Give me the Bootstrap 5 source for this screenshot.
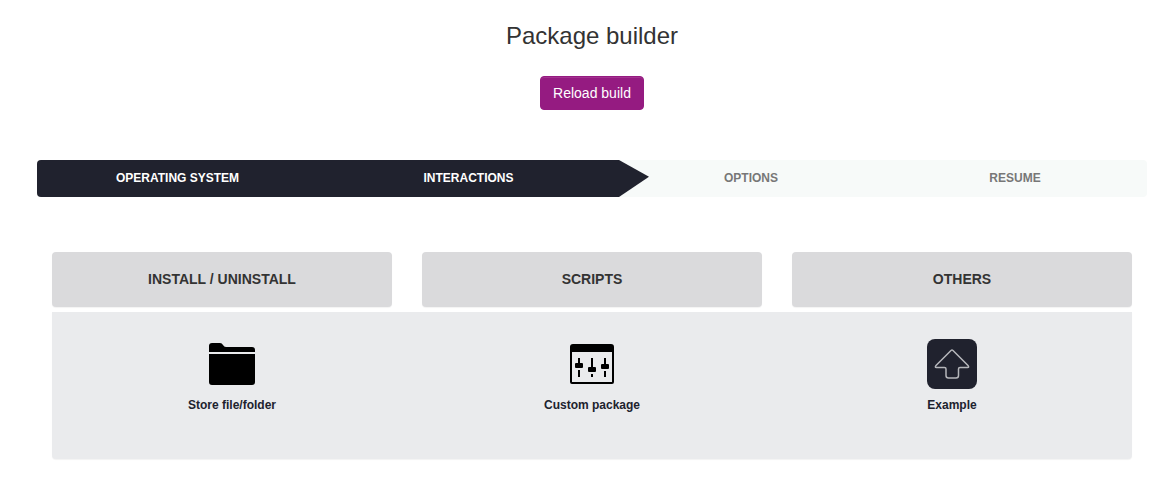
<!DOCTYPE html>
<html lang="en">
<head>
<meta charset="utf-8">
<meta name="viewport" content="width=device-width, initial-scale=1">
<title>Package builder</title>
<link href="https://cdn.jsdelivr.net/npm/bootstrap@5.3.0/dist/css/bootstrap.min.css" rel="stylesheet">
<style>
body { font-family: "Liberation Sans", Arial, sans-serif; font-size: 14px; line-height: 20px; color: #333; background: #fff; }
.builder { padding: 20px 25px 30px 37px; }
.builder-title { font-size: 24px; line-height: 32px; margin-bottom: 24px; font-weight: 400; }
.btn-reload { --bs-btn-color: #fff; --bs-btn-bg: #951b81; --bs-btn-border-color: #951b81; --bs-btn-hover-color: #fff; --bs-btn-hover-bg: #7d166c; --bs-btn-hover-border-color: #7d166c; --bs-btn-font-size: 14px; --bs-btn-line-height: 20px; --bs-btn-border-radius: 4px; box-shadow: inset 0 1px 0 #a4328f; }
.steps { margin: 50px 0 55px; background: #f7faf9; border-radius: 4px; font-size: 12px; line-height: 17px; font-weight: 700; }
.step { position: relative; padding: 10px 0; color: #777; text-align: center; text-decoration: none; flex: 264 1 0; }
.step-system { flex-grow: 281; border-radius: 4px 0 0 4px; }
.step-interactions { flex-grow: 301; }
.step-done { background: #20222e; color: #fff; }
.step-current::after { content: ""; position: absolute; left: calc(100% - 2px); top: 0; height: 100%; width: 32px; background: #20222e; clip-path: polygon(0 0, 2px 0, 100% 45%, 2px 100%, 0 100%); }
.board { padding: 0 15px; }
.heads { --bs-gutter-x: 30px; margin-bottom: 5px; }
.head-box { background: #dadadc; border-radius: 4px; padding: 18px 0; font-size: 14px; line-height: 19px; font-weight: 700; text-align: center; box-shadow: 0 1px 1px rgba(0,0,0,.05); margin: 0; }
.tools { background: #eaebed; padding: 27px 0 45px; border-radius: 0 0 4px 4px; box-shadow: 0 1px 1px rgba(0,0,0,.05); }
.tool { background: none; border: 0; padding: 0; color: #20222e; font-size: 12px; line-height: 18px; font-weight: 700; }
.tool svg { display: block; margin: 0 auto 7px; }
</style>
</head>
<body>
<main class="builder">
  <header class="text-center">
    <h1 class="builder-title">Package builder</h1>
    <button type="button" class="btn btn-reload">Reload build</button>
  </header>
  <nav class="steps d-flex" aria-label="Build steps">
    <a href="#system" class="step step-system step-done">OPERATING SYSTEM</a>
    <a href="#interactions" class="step step-interactions step-done step-current" aria-current="step">INTERACTIONS</a>
    <a href="#options" class="step">OPTIONS</a>
    <a href="#resume" class="step">RESUME</a>
  </nav>
  <section class="board">
    <div class="row heads">
      <div class="col-4"><h2 class="head-box">INSTALL / UNINSTALL</h2></div>
      <div class="col-4"><h2 class="head-box">SCRIPTS</h2></div>
      <div class="col-4"><h2 class="head-box">OTHERS</h2></div>
    </div>
    <div class="tools row g-0 text-center">
      <div class="col-4">
        <button type="button" class="tool">
          <svg width="50" height="50" viewBox="0 0 50 50" aria-hidden="true">
            <path d="M2 13V7q0-3 3-3h8q2 0 3 2t3 2h26q3 0 3 3v2zM2 15h46v28q0 3-3 3H5q-3 0-3-3z"/>
          </svg>
          Store file/folder
        </button>
      </div>
      <div class="col-4">
        <button type="button" class="tool">
          <svg width="50" height="50" viewBox="0 0 50 50" aria-hidden="true">
            <path fill-rule="evenodd" d="M3 8q0-3 3-3h38q3 0 3 3v35q0 2-2 2H5q-2 0-2-2zM5 13v30h40V13z"/>
            <path d="M11 19h2v5h-2zM11 31h2v7h-2zM24 19h2v9h-2zM24 35h2v3h-2zM37 19h2v6h-2zM37 32h2v6h-2z"/>
            <rect x="8" y="24" width="8" height="5" rx="1"/>
            <rect x="21" y="28" width="8" height="5" rx="1"/>
            <rect x="34" y="25" width="8" height="5" rx="1"/>
          </svg>
          Custom package
        </button>
      </div>
      <div class="col-4">
        <button type="button" class="tool">
          <svg width="50" height="50" viewBox="0 0 50 50" aria-hidden="true">
            <rect width="50" height="50" rx="8" fill="#20222e"/>
            <path d="M24 11.500q1-1 2 0L41 26.500q1.500 2-.5 2H33q-1.500 0-1.500 1.500v6.500q0 2.500-2.500 2.500h-7.500q-2.500 0-2.500-2.500V30q0-1.500-1.500-1.500h-8q-2 0-.5-2z" fill="none" stroke="#b5b6ba" stroke-width="1.500"/>
          </svg>
          Example
        </button>
      </div>
    </div>
  </section>
</main>
<script src="https://cdn.jsdelivr.net/npm/bootstrap@5.3.0/dist/js/bootstrap.bundle.min.js"></script>
</body>
</html>
